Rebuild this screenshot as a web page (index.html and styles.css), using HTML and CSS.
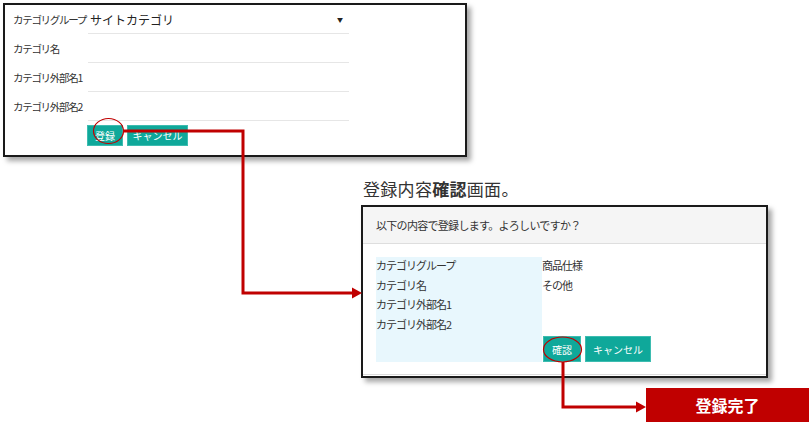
FILE: index.html
```html
<!DOCTYPE html>
<html lang="ja">
<head>
<meta charset="utf-8">
<link rel="stylesheet" href="styles.css">
</head>
<body>
<div class="canvas">
  <section class="win win-form">
    <div class="form-grid">
      <div class="lbl">カテゴリグループ</div>
      <div class="fld select"><span>サイトカテゴリ</span><span class="caret">▼</span></div>
      <div class="lbl">カテゴリ名</div>
      <div class="fld"></div>
      <div class="lbl">カテゴリ外部名1</div>
      <div class="fld"></div>
      <div class="lbl">カテゴリ外部名2</div>
      <div class="fld"></div>
    </div>
    <div class="btns btns-form">
      <span class="btn btn-a">登録</span>
      <span class="btn btn-b">キャンセル</span>
    </div>
  </section>

  <h2 class="title">登録内容<b>確認</b>画面。</h2>

  <section class="win win-confirm">
    <div class="head">以下の内容で登録します。よろしいですか？</div>
    <div class="body">
      <div class="conf-grid">
        <div class="labels">
          <div class="row">カテゴリグループ</div>
          <div class="row">カテゴリ名</div>
          <div class="row">カテゴリ外部名1</div>
          <div class="row">カテゴリ外部名2</div>
        </div>
        <div class="values">
          <div class="row">商品仕様</div>
          <div class="row">その他</div>
          <div class="row"></div>
          <div class="row"></div>
          <div class="btns btns-conf">
            <span class="btn btn-c">確認</span>
            <span class="btn btn-d">キャンセル</span>
          </div>
        </div>
      </div>
      <div class="foot-line"></div>
    </div>
  </section>

  <div class="done">登録完了</div>

  <svg class="arrows" width="812" height="427" viewBox="0 0 812 427">
    <g fill="none" stroke="#c00000">
      <ellipse cx="108.5" cy="131" rx="15" ry="12.5" stroke-width="1.2"/>
      <ellipse cx="562.5" cy="349.5" rx="19" ry="12.5" stroke-width="1.2"/>
      <path d="M123 131 H243 V293 H353" stroke-width="3"/>
      <path d="M563 362 V407 H637" stroke-width="3"/>
    </g>
    <g fill="#c00000">
      <polygon points="352,287.5 362,293 352,298.5"/>
      <polygon points="636,401.5 646,407 636,412.5"/>
    </g>
  </svg>
</div>
</body>
</html>
```
FILE: styles.css
```css
* { box-sizing: border-box; }
html, body {
  margin: 0;
  padding: 0;
  background: #fff;
}
body {
  font-family: "Noto Sans CJK JP", "Liberation Sans", sans-serif;
  color: #333;
  font-size: 11px;
}
.canvas {
  position: relative;
  width: 812px;
  height: 427px;
  overflow: hidden;
}
.win {
  position: absolute;
  background: #fff;
  border: 2px solid #1a1a1a;
  box-shadow: 4px 4px 5px rgba(0, 0, 0, 0.35);
}
.win-form {
  left: 3px;
  top: 3px;
  width: 464px;
  height: 154px;
}
.form-grid {
  display: grid;
  grid-template-columns: 75px 261px;
  grid-auto-rows: 29px;
  padding-left: 8px;
}
.lbl {
  display: flex;
  align-items: center;
  white-space: nowrap;
  letter-spacing: -1.3px;
  color: #333;
  font-size: 10.5px;
}
.fld {
  border-bottom: 1px solid #e6e6e6;
}
.select {
  display: flex;
  align-items: center;
  justify-content: space-between;
  padding-left: 2px;
  padding-right: 6px;
  font-size: 12px;
  color: #222;
}
.caret {
  font-size: 6px;
  color: #222;
}
.btns {
  display: flex;
  gap: 4px;
}
.btns-form {
  margin-top: 4px;
  margin-left: 82px;
}
.btn {
  display: flex;
  align-items: center;
  justify-content: center;
  background: #0fa89a;
  color: #fff;
  font-size: 10px;
  border: 1px solid #3dbcb0;
}
.btn-a { width: 36px; height: 21px; }
.btn-b { width: 61px; height: 21px; }
.btn-c { width: 38px; height: 26px; }
.btn-d { width: 66px; height: 26px; }
.title {
  position: absolute;
  left: 363px;
  top: 176px;
  margin: 0;
  font-size: 17px;
  font-weight: normal;
  color: #333;
  letter-spacing: 0.3px;
  white-space: nowrap;
}
.title b { font-weight: bold; }
.win-confirm {
  left: 361px;
  top: 205px;
  width: 407px;
  height: 173px;
}
.head {
  height: 37px;
  background: #f5f5f5;
  border-bottom: 1px solid #dedede;
  display: flex;
  align-items: center;
  padding-left: 13px;
  font-size: 11px;
  letter-spacing: -0.7px;
  color: #333;
}
.body {
  padding: 13px 0 0 13px;
}
.conf-grid {
  display: flex;
}
.labels {
  width: 166px;
  background: #e8f7fd;
  height: 105px;
}
.row {
  height: 19.5px;
  line-height: 17px;
  white-space: nowrap;
  letter-spacing: -1px;
  font-size: 11px;
  color: #333;
}
.values {
  display: flex;
  flex-direction: column;
}
.btns-conf {
  margin-top: 1px;
  margin-left: 1px;
}
.foot-line {
  margin: 12px 0 0 -13px;
  border-top: 1px solid #dcdcdc;
}
.done {
  position: absolute;
  left: 646px;
  top: 388px;
  width: 163px;
  height: 34px;
  background: #c00000;
  color: #fff;
  font-weight: bold;
  font-size: 16px;
  display: flex;
  align-items: center;
  justify-content: center;
}
.arrows {
  position: absolute;
  left: 0;
  top: 0;
}
```
